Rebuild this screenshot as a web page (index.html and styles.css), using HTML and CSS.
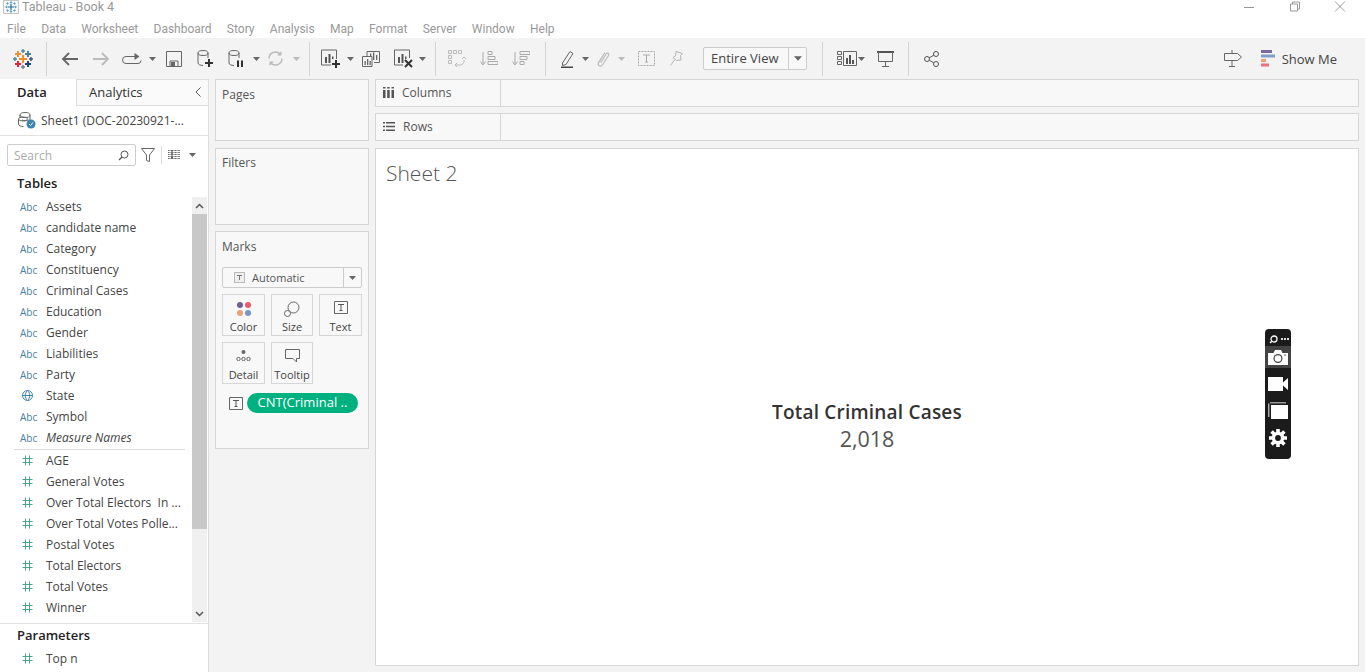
FILE: index.html
```html
<!DOCTYPE html>
<html lang="en">
<head>
    <meta charset="UTF-8">
    <title>Tableau - Book 4</title>
    <link rel="stylesheet" href="styles.css">
</head>
<body>
    <svg class="defs" width="0" height="0">
        <symbol id="cross" viewBox="0 0 10 10"><path d="M5 0v10M0 5h10" stroke-width="2" stroke="currentColor"/></symbol>
        <symbol id="num" viewBox="0 0 11 11"><path d="M3.500 .5v10M7.500 .5v10M.5 3.500h10M.5 7.500h10" stroke="#4aa58a" fill="none"/></symbol>
        <symbol id="caret" viewBox="0 0 7 4"><path d="M0 0h7L3.500 4z" fill="#666"/></symbol>
    </svg>

    <div class="titlebar">
        <svg class="app-icon" width="16" height="14" viewBox="0 0 16 14">
            <path d="M.5.500h15v13H.5z" fill="#f6f8fa" stroke="#c4c4c4"/>
            <use href="#cross" x="5" y="4" width="6" height="6" color="#1f6f9f"/>
            <use href="#cross" x="6.500" y="1" width="3" height="3" color="#2b7fb0"/>
            <use href="#cross" x="6.500" y="10" width="3" height="3" color="#2b7fb0"/>
            <use href="#cross" x="2" y="5.500" width="3" height="3" color="#2b7fb0"/>
            <use href="#cross" x="11" y="5.500" width="3" height="3" color="#2b7fb0"/>
            <use href="#cross" x="3" y="2" width="3" height="3" color="#4f93bb"/>
            <use href="#cross" x="10" y="2" width="3" height="3" color="#4f93bb"/>
            <use href="#cross" x="3" y="9" width="3" height="3" color="#4f93bb"/>
            <use href="#cross" x="10" y="9" width="3" height="3" color="#4f93bb"/>
        </svg>
        <span class="app-title">Tableau - Book 4</span>
        <div class="win-controls">
            <svg width="14" height="10" viewBox="0 0 14 10"><path d="M2 5.500h10" stroke="#999"/></svg>
            <svg width="12" height="11" viewBox="0 0 12 11"><path d="M1.500 3h7v7h-7zM3.500 3V1h7v7H8.500" stroke="#999" fill="none"/></svg>
            <svg width="12" height="11" viewBox="0 0 12 11"><path d="M1 .5l10 10M11 .5l-10 10" stroke="#999" fill="none"/></svg>
        </div>
    </div>

    <nav class="menubar">
        <span>File</span><span>Data</span><span>Worksheet</span><span>Dashboard</span><span>Story</span><span>Analysis</span><span>Map</span><span>Format</span><span>Server</span><span>Window</span><span>Help</span>
    </nav>

    <div class="toolbar">
        <div class="tool tool-logo">
            <svg width="20" height="20" viewBox="0 0 20 20" fill="none">
                <path d="M10 6v8M6 10h8" stroke="#f28e2b" stroke-width="2"/>
                <path d="M5 2v6M2 5h6" stroke="#f28e2b" stroke-width="2"/>
                <path d="M15 2v6M12 5h6" stroke="#4e8098" stroke-width="2"/>
                <path d="M5 12v6M2 15h6" stroke="#e0263c" stroke-width="2"/>
                <path d="M15 12v6M12 15h6" stroke="#1f447a" stroke-width="2"/>
                <path d="M10 0v4M8 2h4" stroke="#5b8aa0" stroke-width="1.500"/>
                <path d="M10 16v4M8 18h4" stroke="#7a7fa0" stroke-width="1.500"/>
                <path d="M2 8v4M0 10h4" stroke="#5b8aa0" stroke-width="1.500"/>
                <path d="M18 8v4M16 10h4" stroke="#3f5a8a" stroke-width="1.500"/>
            </svg>
        </div>
        <i class="sep sep-first"></i>
        <div class="tool"><svg width="18" height="14" viewBox="0 0 18 14"><path d="M17 7H2M8 1L2 7l6 6" stroke="#666" stroke-width="1.800" fill="none"/></svg></div>
        <div class="tool"><svg width="18" height="14" viewBox="0 0 18 14"><path d="M1 7h15M10 1l6 6-6 6" stroke="#bbb" stroke-width="1.800" fill="none"/></svg></div>
        <div class="tool"><svg width="20" height="12" viewBox="0 0 20 12"><path d="M16 3.500H4a3 3 0 0 0 0 7h12a3 3 0 0 0 3-3" stroke="#666" fill="none"/><path d="M12.500 0l5 3.500-5 3.500z" fill="#666"/></svg></div>
        <div class="drop"><svg width="7" height="4"><use href="#caret"/></svg></div>
        <div class="tool"><svg width="16" height="16" viewBox="0 0 16 16"><path d="M.5.500h15v15H.5z" stroke="#666" fill="none"/><path d="M4 10h8v5.500H4z" stroke="#666" fill="none"/><path d="M5 11h4v4H5z" fill="#666"/></svg></div>
        <div class="tool"><svg width="16" height="18" viewBox="0 0 16 18"><ellipse cx="6" cy="3" rx="5" ry="2.500" stroke="#666" fill="none"/><path d="M1 3v10c0 1.500 2 2.300 5 2.500M11 3v5" stroke="#666" fill="none"/><path d="M12 9v8M8 13h8" stroke="#333" stroke-width="2"/></svg></div>
        <div class="tool"><svg width="16" height="18" viewBox="0 0 16 18"><ellipse cx="6" cy="3" rx="5" ry="2.500" stroke="#666" fill="none"/><path d="M1 3v10c0 1.500 2 2.300 5 2.500M11 3v5" stroke="#666" fill="none"/><path d="M9 10.500h2v6.500H9zM13 10.500h2v6.500h-2z" fill="#333"/></svg></div>
        <div class="drop"><svg width="7" height="4"><use href="#caret"/></svg></div>
        <div class="tool tool-refresh"><svg width="17" height="17" viewBox="0 0 17 17"><path d="M2 8.500a6.500 6.500 0 0 1 11-4.700" stroke="#bbb" stroke-width="1.500" fill="none"/><path d="M15 8.500a6.500 6.500 0 0 1-11 4.700" stroke="#bbb" stroke-width="1.500" fill="none"/><path d="M14.500 1v4.500H10zM2.500 16v-4.500H7z" fill="#bbb"/></svg></div>
        <div class="drop drop-off"><svg width="7" height="4"><use href="#caret"/></svg></div>
        <i class="sep sep-refresh"></i>
        <div class="tool"><svg width="20" height="20" viewBox="0 0 20 20"><path d="M15.500 10V1H.5v15H10" stroke="#666" fill="none"/><path d="M4 8h2v6H4zM7.500 5h2v9h-2zM11 7.500h1.500V10H11z" fill="#555"/><path d="M15 11v8M11 15h8" stroke="#333" stroke-width="2"/></svg></div>
        <div class="drop drop-sheet"><svg width="7" height="4"><use href="#caret"/></svg></div>
        <div class="tool"><svg class="dup-icon" width="18" height="16" viewBox="0 0 18 16"><path d="M5 5V.5h12.500v11H12" stroke="#666" fill="none"/><path d="M.5 5.500H10v10H.5z" fill="#f3f3f3" stroke="#666"/><path d="M8 2.500h1.300V5H8zM11 1.500h1.300V9H11zM14 4h1.300v5H14zM2.500 10h1.300v4H2.500zM5 8h1.300v6H5zM7.500 10h1.300v4H7.500z" fill="#666"/></svg></div>
        <div class="tool"><svg width="20" height="20" viewBox="0 0 20 20"><path d="M15.500 9V1H.5v15H9" stroke="#666" fill="none"/><path d="M4 8h2v6H4zM7.500 5h2v9h-2zM11 7.500h1.500V10H11z" fill="#555"/><path d="M11 11l7 7M18 11l-7 7" stroke="#333" stroke-width="2"/></svg></div>
        <div class="drop drop-clear"><svg width="7" height="4"><use href="#caret"/></svg></div>
        <i class="sep"></i>
        <div class="tool tool-wide"><svg width="18" height="17" viewBox="0 0 18 17"><path d="M.5.500h3v3h-3zM5.500.500h3v3h-3zM10.500.500h3v3h-3zM.5 5.500h3v3h-3zM.5 10.500h3v3h-3zM7 15h5a4 4 0 0 0 4-5" stroke="#bbb" fill="none"/><path d="M14 9l2-2 2 2M9 13l-2 2 2 2" stroke="#bbb" fill="none"/></svg></div>
        <div class="tool tool-wide"><svg width="18" height="15" viewBox="0 0 18 15"><path d="M3 1v12M.5 10.500L3 14l2.500-3.500" stroke="#aaa" fill="none"/><path d="M8 .5h4v3H8zM8 5.500h7v3H8zM8 10.500h10v3H8z" stroke="#aaa" fill="none"/></svg></div>
        <div class="tool tool-wide"><svg width="18" height="15" viewBox="0 0 18 15"><path d="M3 1v12M.5 10.500L3 14l2.500-3.500" stroke="#aaa" fill="none"/><path d="M8 .5h10v3H8zM8 5.500h7v3H8zM8 10.500h4v3H8z" stroke="#aaa" fill="none"/></svg></div>
        <i class="sep sep-sort"></i>
        <div class="tool"><svg width="13" height="18" viewBox="0 0 13 18"><path d="M1.500 13L9 1.500l3 2L5 14.500l-3.500 1z" stroke="#666" fill="none"/><path d="M0 16.500h12v1.500H0z" fill="#444"/></svg></div>
        <div class="drop drop-tight"><svg width="7" height="4"><use href="#caret"/></svg></div>
        <div class="tool"><svg width="13" height="16" viewBox="0 0 13 16"><path d="M4 11.500L9 3c1.200-2 3.500-.5 2.500 1.500L5.500 14c-1.500 2.200-5.500.5-4-2.500L8 1.500" stroke="#bbb" stroke-width="1.200" fill="none"/><path d="M6 6L2.500 12" stroke="#ccc" fill="none"/></svg></div>
        <div class="drop drop-clip drop-off"><svg width="7" height="4"><use href="#caret"/></svg></div>
        <div class="tool"><svg width="17" height="15" viewBox="0 0 17 15"><path d="M.5.500h16v14H.5z" stroke="#aaa" stroke-dasharray="2 1" fill="none"/><path d="M5 4h7M8.500 4v7M7 11h3" stroke="#aaa" fill="none"/></svg></div>
        <div class="tool"><svg class="pin-icon" width="13" height="15" viewBox="0 0 13 15"><path d="M6 .5l6.500 2-2 2 .5 4.500-4.500 .5-3.500-3 2.500-1.500zM4.500 9L.5 14.500" stroke="#b5b5b5" fill="none"/></svg></div>
        <div class="fit-select">
            <span class="fit-label">Entire View</span>
            <span class="fit-arrow"><svg width="8" height="5"><use href="#caret"/></svg></span>
        </div>
        <i class="sep sep-fit"></i>
        <div class="tool"><svg width="20" height="15" viewBox="0 0 20 15"><path d="M.5.500h4v3h-4zM.5 5.500h4v3h-4zM.5 10.500h4v3h-4zM6.500.500h13v14h-13z" stroke="#666" fill="none"/><path d="M9 7h2v6H9zM12 4h2v9h-2zM15 9h2v4h-2z" fill="#555"/></svg></div>
        <div class="drop drop-show"><svg width="7" height="4"><use href="#caret"/></svg></div>
        <div class="tool"><svg width="17" height="16" viewBox="0 0 17 16"><path d="M0 1h17" stroke="#555" stroke-width="2"/><path d="M1.500 1v9.500h14V1M8.500 10.500v5M5 15.500h7" stroke="#666" fill="none"/></svg></div>
        <i class="sep sep-present"></i>
        <div class="tool"><svg width="15" height="16" viewBox="0 0 15 16"><circle cx="3" cy="8" r="2.500" stroke="#555" fill="none"/><circle cx="12" cy="3" r="2.500" stroke="#555" fill="none"/><circle cx="12" cy="13" r="2.500" stroke="#555" fill="none"/><path d="M5.200 6.800l4.600-2.600M5.200 9.200l4.600 2.600" stroke="#555"/></svg></div>
        <div class="toolbar-right">
            <div class="tool"><svg width="18" height="17" viewBox="0 0 18 17"><path d="M.5 3.500h13l4 3.500-4 3.500H.5zM8 0v3.500M8 10.500V16M5 16.500h6" stroke="#666" fill="none"/></svg></div>
            <div class="show-me">
                <svg width="14" height="17" viewBox="0 0 14 17"><path d="M0 0h11v3H0z" fill="#7d6a9c"/><path d="M0 4.500h14v3H0z" fill="#7f9fc6"/><path d="M0 9h5v3H0z" fill="#f0a070"/><path d="M0 13.500h8v3H0z" fill="#ee6f7f"/></svg>
                <span>Show Me</span>
            </div>
        </div>
    </div>

    <div class="workspace">
        <aside class="sidebar">
            <div class="tabs">
                <div class="tab tab-active">Data</div>
                <div class="tab">Analytics
                    <svg class="collapse" width="6" height="10" viewBox="0 0 6 10"><path d="M5.500.5L1 5l4.500 4.500" stroke="#555" fill="none"/></svg>
                </div>
            </div>
            <div class="datasource">
                <svg width="18" height="17" viewBox="0 0 18 17"><ellipse cx="7" cy="3" rx="5" ry="2.500" stroke="#666" fill="none"/><path d="M2 3v3M12 3v5M4 8c2 1 5 1 7 0" stroke="#666" fill="none"/><ellipse cx="5" cy="7" rx="4.500" ry="2" stroke="#666" fill="none"/><path d="M.5 7v5c0 1.500 2 2.500 5 2.500" stroke="#666" fill="none"/><circle cx="13" cy="12" r="4.500" fill="#3d85b0"/><path d="M11 12l1.500 1.500 2.500-3" stroke="#fff" fill="none"/></svg>
                <span>Sheet1 (DOC-20230921-...</span>
            </div>
            <div class="search-row">
                <div class="search-box">
                    <span>Search</span>
                    <svg width="11" height="11" viewBox="0 0 11 11"><circle cx="6.500" cy="4.500" r="3.500" stroke="#555" fill="none"/><path d="M4 7l-3 3" stroke="#555" stroke-width="1.300"/></svg>
                </div>
                <svg class="filter-icon" width="14" height="14" viewBox="0 0 14 14"><path d="M.5.500h13L8.500 7v6.500l-3-1V7z" stroke="#666" fill="none"/></svg>
                <i class="search-sep"></i>
                <svg class="list-icon" width="12" height="9" viewBox="0 0 12 9"><path d="M0 .5h12M0 2.500h12M0 4.500h12M0 6.500h12M0 8.500h12M3.500 0v9M4.500 0v9" stroke="#666" stroke-dasharray="1 .4" fill="none"/></svg>
                <svg class="list-caret" width="7" height="4"><use href="#caret"/></svg>
            </div>
            <h3 class="section-title">Tables</h3>
            <div class="fields">
                <div class="field-list">
                    <div class="field"><span class="abc">Abc</span>Assets</div>
                    <div class="field"><span class="abc">Abc</span>candidate name</div>
                    <div class="field"><span class="abc">Abc</span>Category</div>
                    <div class="field"><span class="abc">Abc</span>Constituency</div>
                    <div class="field"><span class="abc">Abc</span>Criminal Cases</div>
                    <div class="field"><span class="abc">Abc</span>Education</div>
                    <div class="field"><span class="abc">Abc</span>Gender</div>
                    <div class="field"><span class="abc">Abc</span>Liabilities</div>
                    <div class="field"><span class="abc">Abc</span>Party</div>
                    <div class="field"><span class="type-icon"><svg width="11" height="11" viewBox="0 0 11 11"><circle cx="5.500" cy="5.500" r="5" stroke="#3d85b0" fill="none"/><path d="M.5 5.500h10M5.500.5c-3 3-3 7 0 10M5.500.5c3 3 3 7 0 10" stroke="#3d85b0" fill="none"/></svg></span>State</div>
                    <div class="field"><span class="abc">Abc</span>Symbol</div>
                    <div class="field field-italic"><span class="abc">Abc</span>Measure Names</div>
                    <hr class="field-line">
                    <div class="field"><span class="type-icon"><svg width="11" height="11"><use href="#num"/></svg></span>AGE</div>
                    <div class="field"><span class="type-icon"><svg width="11" height="11"><use href="#num"/></svg></span>General Votes</div>
                    <div class="field"><span class="type-icon"><svg width="11" height="11"><use href="#num"/></svg></span>Over Total Electors&nbsp; In ...</div>
                    <div class="field"><span class="type-icon"><svg width="11" height="11"><use href="#num"/></svg></span>Over Total Votes Polle...</div>
                    <div class="field"><span class="type-icon"><svg width="11" height="11"><use href="#num"/></svg></span>Postal Votes</div>
                    <div class="field"><span class="type-icon"><svg width="11" height="11"><use href="#num"/></svg></span>Total Electors</div>
                    <div class="field"><span class="type-icon"><svg width="11" height="11"><use href="#num"/></svg></span>Total Votes</div>
                    <div class="field"><span class="type-icon"><svg width="11" height="11"><use href="#num"/></svg></span>Winner</div>
                </div>
                <div class="scrollbar">
                    <div class="scroll-btn"><svg width="9" height="6" viewBox="0 0 9 6"><path d="M1 5l3.500-3.500L8 5" stroke="#555" stroke-width="1.500" fill="none"/></svg></div>
                    <div class="scroll-thumb"></div>
                    <div class="scroll-track"></div>
                    <div class="scroll-btn"><svg width="9" height="6" viewBox="0 0 9 6"><path d="M1 1l3.500 3.500L8 1" stroke="#555" stroke-width="1.500" fill="none"/></svg></div>
                </div>
            </div>
            <div class="parameters">
                <h3 class="section-title">Parameters</h3>
                <div class="field"><span class="type-icon"><svg width="11" height="11"><use href="#num"/></svg></span>Top n</div>
            </div>
        </aside>

        <section class="cards">
            <div class="card card-pages"><div class="card-title">Pages</div></div>
            <div class="card card-filters"><div class="card-title">Filters</div></div>
            <div class="card card-marks">
                <div class="card-title">Marks</div>
                <div class="mark-select">
                    <span class="mark-type">
                        <svg width="11" height="11" viewBox="0 0 11 11"><path d="M0 0h11v11H0z" fill="#bbb"/><path d="M1 1h9v9H1z" fill="#eee"/><path d="M3 3.500h5M5.500 3.500v4.500" stroke="#777" fill="none"/></svg>
                        Automatic
                    </span>
                    <span class="mark-arrow"><svg width="7" height="4"><use href="#caret"/></svg></span>
                </div>
                <div class="mark-grid">
                    <div class="mark-btn">
                        <svg width="16" height="16" viewBox="0 0 16 16"><circle cx="4" cy="4" r="3" fill="#6f5f92"/><circle cx="12" cy="4" r="3" fill="#ee5a6a"/><circle cx="4" cy="12" r="3" fill="#f0a070"/><circle cx="12" cy="12" r="3" fill="#7596c4"/></svg>
                        <span>Color</span>
                    </div>
                    <div class="mark-btn">
                        <svg width="16" height="16" viewBox="0 0 16 16"><circle cx="9.500" cy="6.500" r="5.500" stroke="#666" fill="none"/><circle cx="3.500" cy="12.500" r="3" stroke="#666" fill="#f8f8f8"/></svg>
                        <span>Size</span>
                    </div>
                    <div class="mark-btn">
                        <svg width="14" height="13" viewBox="0 0 14 13"><path d="M.5.500h13v12H.5z" stroke="#666" fill="none"/><path d="M4 3.500h6M7 3.500v6M5.500 9.500h3" stroke="#555" fill="none"/></svg>
                        <span>Text</span>
                    </div>
                    <div class="mark-btn">
                        <svg width="15" height="12" viewBox="0 0 15 12"><circle cx="7.500" cy="3" r="2" fill="#666"/><circle cx="2.500" cy="10" r="1.700" stroke="#666" fill="none"/><circle cx="7.500" cy="10" r="1.700" stroke="#666" fill="none"/><circle cx="12.500" cy="10" r="1.700" stroke="#666" fill="none"/></svg>
                        <span>Detail</span>
                    </div>
                    <div class="mark-btn">
                        <svg width="15" height="14" viewBox="0 0 15 14"><path d="M.5.500h14v9h-3v3.500l-3.500-3.500H.5z" stroke="#666" fill="none"/></svg>
                        <span>Tooltip</span>
                    </div>
                </div>
                <div class="pill-row">
                    <svg width="14" height="13" viewBox="0 0 14 13"><path d="M.5.500h13v12H.5z" stroke="#666" fill="none"/><path d="M4 3.500h6M7 3.500v6M5.500 9.500h3" stroke="#555" fill="none"/></svg>
                    <span class="pill">CNT(Criminal ..</span>
                </div>
            </div>
        </section>

        <main class="main">
            <div class="shelf">
                <div class="shelf-label">
                    <svg width="11" height="11" viewBox="0 0 11 11"><path d="M0 3h2.500v8H0zM4.200 3h2.500v8H4.200zM8.500 3H11v8H8.500zM0 0h2.500v1.500H0zM4.200 0h2.500v1.500H4.200zM8.500 0H11v1.500H8.500z" fill="#555"/></svg>
                    Columns
                </div>
            </div>
            <div class="shelf">
                <div class="shelf-label">
                    <svg width="12" height="9" viewBox="0 0 12 9"><path d="M0 0h2v1.500H0zM3 0h9v1.500H3zM0 3.700h2v1.500H0zM3 3.700h9v1.500H3zM0 7.500h2V9H0zM3 7.500h9V9H3z" fill="#555"/></svg>
                    Rows
                </div>
            </div>
            <div class="view">
                <div class="sheet-title">Sheet 2</div>
                <div class="viz">
                    <div class="viz-label">Total Criminal Cases</div>
                    <div class="viz-value">2,018</div>
                </div>
            </div>
        </main>
    </div>

    <div class="capture-bar">
        <div class="capture-head">
            <svg width="9" height="9" viewBox="0 0 9 9"><circle cx="5" cy="4" r="3" stroke="#fff" stroke-width="1.300" fill="none"/><path d="M1 8l2-2" stroke="#fff" stroke-width="1.500"/></svg>
            <span class="capture-dots"><i></i><i></i><i></i></span>
        </div>
        <div class="capture-btn capture-btn-on">
            <svg width="20" height="15" viewBox="0 0 20 15"><path d="M0 3h5.500L7 0h6l1.500 3H20v12H0z" fill="#fff"/><circle cx="10" cy="8.500" r="4.500" fill="#444"/><circle cx="10" cy="8.500" r="3.300" fill="#fff"/><circle cx="17" cy="5" r=".8" fill="#444"/></svg>
        </div>
        <div class="capture-btn">
            <svg width="20" height="14" viewBox="0 0 20 14"><path d="M0 0h15v14H0zM15 5.500L20 1v12l-5-4.500z" fill="#fff"/></svg>
        </div>
        <div class="capture-btn">
            <svg width="20" height="17" viewBox="0 0 20 17"><path d="M2 0h16v1.500H2z" fill="#999"/><path d="M0 1.500h1.500V15H0z" fill="#aaa"/><path d="M3 3h17v14H3z" fill="#fff"/></svg>
        </div>
        <div class="capture-btn">
            <svg width="20" height="20" viewBox="0 0 20 20"><path d="M10 1v4M10 15v4M1 10h4M15 10h4M3.600 3.600l3 3M13.400 13.400l3 3M16.400 3.600l-3 3M6.600 13.400l-3 3" stroke="#fff" stroke-width="3.600"/><circle cx="10" cy="10" r="4.600" stroke="#fff" stroke-width="3.400" fill="none"/></svg>
        </div>
    </div>
</body>
</html>
```

FILE: styles.css
```css
* {
    box-sizing: border-box;
}
html, body {
    height: 100%;
}
body {
    margin: 0;
    overflow: hidden;
    position: relative;
    background: #fff;
    color: #333;
    font-family: "Open Sans", "Noto Sans", sans-serif;
    font-size: 12px;
    display: flex;
    flex-direction: column;
}
svg {
    display: block;
    flex: none;
}
.defs {
    position: absolute;
}

/* title + menu */
.titlebar {
    height: 19px;
    display: flex;
    align-items: center;
    padding: 0 19px 6px 3px;
    color: #999;
}
.app-icon {
    margin-right: 3px;
}
.app-title {
    font-family: Roboto, sans-serif;
    font-size: 12.500px;
}
.win-controls {
    margin-left: auto;
    display: flex;
    align-items: center;
    gap: 33px;
}
.menubar {
    height: 19px;
    display: flex;
    align-items: center;
    gap: 15.300px;
    padding: 1px 0 0 7px;
    color: #999;
    font-family: Roboto, sans-serif;
    font-size: 12px;
}

/* toolbar */
.toolbar {
    height: 41px;
    background: #f3f3f3;
    display: flex;
    align-items: center;
}
.tool {
    width: 31px;
    height: 28px;
    display: flex;
    align-items: center;
    justify-content: center;
}
.tool-logo {
    width: 45px;
}
.tool-wide {
    width: 32px;
}
.tool-refresh {
    margin-left: -2px;
}
.dup-icon {
    margin-right: 3px;
}
.pin-icon {
    margin-right: 3px;
}
.drop {
    width: 11px;
    display: flex;
    justify-content: center;
}
.drop-off {
    opacity: .4;
}
.drop-sheet {
    margin-left: -1px;
    margin-right: 1px;
}
.drop-clear {
    margin-left: -2px;
    margin-right: 2px;
}
.drop-tight {
    margin: 0 -3px;
}
.drop-clip {
    margin: 0 4px 0 -3px;
}
.drop-show {
    margin: 0 3px 0 -6px;
}
.sep {
    width: 1px;
    height: 34px;
    background: #d4d4d4;
    margin: 0 5px;
}
.sep-first {
    margin: 0 7px 0 1px;
}
.sep-refresh {
    margin-left: 7px;
}
.sep-sort {
    margin: 0 6px 0 8px;
}
.sep-fit {
    margin: 0 8px 0 15px;
}
.sep-present {
    margin: 0 7px 0 7px;
}
.fit-select {
    margin-left: 10px;
    width: 104px;
    height: 23px;
    display: flex;
    align-items: center;
    background: #f8f8f8;
    border: 1px solid #ccc;
    border-radius: 2px;
    font-size: 13px;
    color: #444;
}
.fit-label {
    flex: 1;
    padding: 0 0 1px 7px;
}
.fit-arrow {
    width: 18px;
    height: 100%;
    border-left: 1px solid #ccc;
    display: flex;
    align-items: center;
    justify-content: center;
}
.toolbar-right {
    margin-left: auto;
    display: flex;
    align-items: center;
    padding-right: 28px;
}
.show-me {
    margin-left: 12px;
    display: flex;
    align-items: center;
    gap: 7px;
    font-size: 13px;
    color: #444;
}

/* layout below the toolbar */
.workspace {
    flex: 1;
    min-height: 0;
    display: flex;
    background: #f3f3f3;
}
.sidebar {
    width: 209px;
    flex: none;
    background: #fff;
    border-right: 1px solid #ddd;
    display: flex;
    flex-direction: column;
}
.tabs {
    display: flex;
    height: 27px;
}
.tab {
    flex: 1;
    display: flex;
    align-items: center;
    padding: 0 0 2px 12px;
    font-size: 13px;
    background: #fafafa;
    border: 1px solid #ddd;
    border-right: 0;
    position: relative;
}
.tab-active {
    flex: none;
    width: 76px;
    padding-left: 17px;
    background: #fff;
    border: 0;
    color: #222;
    font-weight: 600;
}
.collapse {
    position: absolute;
    right: 7px;
    top: 7px;
}
.datasource {
    height: 30px;
    display: flex;
    align-items: center;
    gap: 5px;
    padding-left: 18px;
    border-bottom: 1px solid #e2e2e2;
    color: #444;
}
.search-row {
    height: 38px;
    padding: 8px 0 0 7px;
    display: flex;
    align-items: flex-start;
}
.search-box {
    width: 129px;
    height: 22px;
    border: 1px solid #ccc;
    border-radius: 2px;
    display: flex;
    align-items: center;
    justify-content: space-between;
    padding: 0 6px;
    color: #aaa;
}
.filter-icon {
    margin: 4px 0 0 5px;
}
.search-sep {
    width: 1px;
    height: 18px;
    background: #ddd;
    margin: 2px 6px 0 6px;
}
.list-icon {
    margin-top: 6px;
}
.list-caret {
    margin: 9px 0 0 9px;
}
.section-title {
    margin: 0;
    padding-left: 17px;
    font-size: 13px;
    font-weight: 600;
    color: #222;
    line-height: 18px;
}
.fields {
    margin-top: 5px;
    height: 427px;
    display: flex;
    align-items: flex-start;
    border-bottom: 1px solid #e2e2e2;
}
.field-list {
    flex: 1;
    min-width: 0;
    margin-top: -1px;
}
.field {
    height: 21px;
    display: flex;
    align-items: center;
    padding-left: 19px;
    white-space: nowrap;
    color: #444;
}
.field-italic {
    font-style: italic;
}
.abc {
    width: 27px;
    flex: none;
    margin-left: 1px;
    margin-right: -1px;
    font-size: 10px;
    font-style: normal;
    font-weight: 500;
    color: #4a7f9f;
}
.type-icon {
    width: 27px;
    flex: none;
    padding-left: 3px;
}
.field-line {
    margin: 1px 7px 0 14px;
    border: 0;
    height: 1px;
    background: #ddd;
}
.scrollbar {
    width: 15px;
    height: 425px;
    margin-right: 1px;
    flex: none;
    display: flex;
    flex-direction: column;
    background: #f0f0f0;
}
.scroll-btn {
    height: 17px;
    display: flex;
    align-items: center;
    justify-content: center;
}
.scroll-thumb {
    height: 315px;
    background: #c8c8c8;
}
.scroll-track {
    flex: 1;
}
.parameters {
    padding-top: 2px;
}
.parameters .field {
    margin-top: 4px;
}

/* pages, filters, marks */
.cards {
    width: 166px;
    flex: none;
    padding: 0 6px;
    display: flex;
    flex-direction: column;
}
.card {
    background: #f8f8f8;
    border: 1px solid #d6d6d6;
    padding: 6px 6px;
    flex: none;
}
.card-title {
    color: #555;
}
.card-pages {
    height: 62px;
}
.card-filters {
    height: 77px;
    margin-top: 7px;
    padding-top: 5px;
}
.card-marks {
    height: 218px;
    margin-top: 6px;
}
.mark-select {
    margin-top: 12px;
    height: 21px;
    border: 1px solid #ccc;
    border-radius: 2px;
    display: flex;
    align-items: center;
    color: #555;
}
.mark-type {
    flex: 1;
    display: flex;
    align-items: center;
    gap: 7px;
    padding-left: 11px;
    font-size: 11px;
}
.mark-arrow {
    width: 18px;
    height: 100%;
    border-left: 1px solid #ccc;
    display: flex;
    align-items: center;
    justify-content: center;
}
.mark-grid {
    margin-top: 6px;
    display: grid;
    grid-template-columns: 43px 42px 43px;
    grid-auto-rows: 42px;
    gap: 6px 6px;
}
.mark-btn {
    border: 1px solid #d6d6d6;
    display: flex;
    flex-direction: column;
    align-items: center;
    justify-content: space-between;
    padding: 6px 0 1px;
    font-size: 11px;
    color: #444;
}
.pill-row {
    margin-top: 9px;
    padding-left: 7px;
    display: flex;
    align-items: center;
    gap: 4px;
}
.pill {
    width: 111px;
    height: 20px;
    border-radius: 10px;
    background: #00b180;
    color: #fff;
    text-align: center;
    font-size: 13px;
    line-height: 19px;
    font-weight: 500;
}

/* shelves and view */
.main {
    width: 984px;
    flex: none;
    display: flex;
    flex-direction: column;
    gap: 6px;
}
.shelf {
    height: 28px;
    flex: none;
    display: flex;
    background: #f8f8f8;
    border: 1px solid #d6d6d6;
}
.shelf:nth-child(2) {
    margin-bottom: 1px;
}
.shelf-label {
    width: 125px;
    height: 100%;
    display: flex;
    align-items: center;
    gap: 8px;
    padding: 0 0 2px 7px;
    border-right: 1px solid #d6d6d6;
    color: #555;
}
.view {
    height: 518px;
    flex: none;
    background: #fff;
    border: 1px solid #d6d6d6;
    display: flex;
    flex-direction: column;
}
.sheet-title {
    padding: 11px 0 0 10px;
    font-size: 21px;
    line-height: 27px;
    font-weight: 300;
    color: #555;
}
.viz {
    flex: 1;
    display: flex;
    flex-direction: column;
    align-items: center;
    padding-top: 213px;
}
.viz-label {
    font-size: 19px;
    letter-spacing: .2px;
    line-height: 24px;
    font-weight: 600;
    color: #333;
}
.viz-value {
    font-size: 21.500px;
    line-height: 30px;
    color: #555;
}

/* screen capture widget over the page */
.capture-bar {
    position: absolute;
    left: 1265px;
    top: 329px;
    width: 26px;
    height: 130px;
    background: #1b1b1b;
    border-radius: 4px;
    padding-top: 3px;
}
.capture-head {
    height: 14px;
    display: flex;
    align-items: center;
    gap: 3px;
    padding-left: 4px;
}
.capture-dots {
    display: flex;
    gap: 1px;
}
.capture-dots i {
    width: 2px;
    height: 2px;
    background: #ddd;
}
.capture-btn {
    height: 27px;
    display: flex;
    align-items: center;
    justify-content: center;
}
.capture-btn-on {
    height: 22px;
    background: #444;
    margin-bottom: 2px;
}
```
